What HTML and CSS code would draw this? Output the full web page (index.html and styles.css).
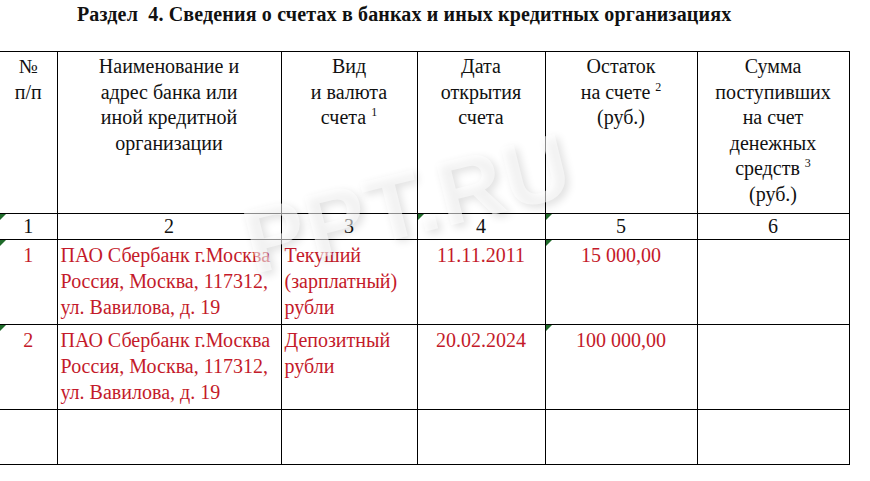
FILE: index.html
```html
<!DOCTYPE html>
<html lang="ru">
<head>
<meta charset="utf-8">
<link rel="stylesheet" href="styles.css">
</head>
<body>
<div class="page">
  <h1 class="title">Раздел&nbsp; 4. Сведения о счетах в банках и иных кредитных организациях</h1>
  <table class="grid">
    <colgroup>
      <col class="c1"><col class="c2"><col class="c3"><col class="c4"><col class="c5"><col class="c6">
    </colgroup>
    <tr class="head">
      <td class="first">№<br>п/п</td>
      <td>Наименование и<br>адрес банка или<br>иной кредитной<br>организации</td>
      <td>Вид<br>и валюта<br>счета <sup>1</sup></td>
      <td>Дата<br>открытия<br>счета</td>
      <td>Остаток<br>на счете <sup>2</sup><br>(руб.)</td>
      <td>Сумма<br>поступивших<br>на счет<br>денежных<br>средств <sup>3</sup><br>(руб.)</td>
    </tr>
    <tr class="nums">
      <td class="first mark">1</td>
      <td>2</td>
      <td>3</td>
      <td class="mark">4</td>
      <td class="mark">5</td>
      <td>6</td>
    </tr>
    <tr class="data">
      <td class="first center mark">1</td>
      <td>ПАО Сбербанк г.Москва<br>Россия, Москва, 117312,<br>ул. Вавилова, д. 19</td>
      <td>Текуший<br>(зарплатный)<br>рубли</td>
      <td class="center">11.11.2011</td>
      <td class="center mark">15 000,00</td>
      <td></td>
    </tr>
    <tr class="data">
      <td class="first center mark">2</td>
      <td>ПАО Сбербанк г.Москва<br>Россия, Москва, 117312,<br>ул. Вавилова, д. 19</td>
      <td>Депозитный<br>рубли</td>
      <td class="center">20.02.2024</td>
      <td class="center mark">100 000,00</td>
      <td></td>
    </tr>
    <tr class="empty">
      <td class="first"></td><td></td><td></td><td></td><td></td><td></td>
    </tr>
  </table>
  <div class="watermark">PPT.RU</div>
</div>
</body>
</html>
```

FILE: styles.css
```css
html, body {
  margin: 0;
  padding: 0;
  background: #fff;
}

.page {
  position: relative;
  width: 870px;
  height: 481px;
  overflow: hidden;
  font-family: "Liberation Serif", serif;
  color: #111;
}

.title {
  margin: 0;
  padding: 3px 0 0 77px;
  height: 51px;
  box-sizing: border-box;
  font-family: "Liberation Serif", serif;
  font-size: 20px;
  font-weight: bold;
  letter-spacing: 0.15px;
  line-height: 22px;
  white-space: nowrap;
}

.grid {
  border-collapse: collapse;
  table-layout: fixed;
  width: 849px;
  font-family: "Liberation Serif", serif;
  font-size: 20px;
  line-height: 25.5px;
}

.c1 { width: 57px; }
.c2 { width: 224px; }
.c3 { width: 136px; }
.c4 { width: 128px; }
.c5 { width: 152px; }
.c6 { width: 152px; }

.grid td {
  border: 1px solid #000;
  padding: 2px 3px 0 3px;
  vertical-align: top;
  position: relative;
  white-space: nowrap;
}

.grid td.first {
  border-left: none;
}

.head td {
  height: 162px;
  box-sizing: border-box;
  text-align: center;
}

.nums td {
  height: 25px;
  box-sizing: border-box;
  padding-top: 0;
  line-height: 25px;
  text-align: center;
}

.data td {
  height: 85px;
  box-sizing: border-box;
  color: #c41a2a;
  line-height: 26px;
}

.data td.center {
  text-align: center;
}

.empty td {
  height: 55px;
  box-sizing: border-box;
}

sup {
  font-size: 12px;
  line-height: 0;
  vertical-align: 8px;
}

.mark::before {
  content: "";
  position: absolute;
  left: 0;
  top: 0;
  width: 0;
  height: 0;
  border-top: 6px solid #1f6b2a;
  border-right: 6px solid transparent;
}

.watermark {
  position: absolute;
  left: 258px;
  top: 190px;
  font-family: "Liberation Sans", Arial, sans-serif;
  font-weight: bold;
  font-size: 92px;
  letter-spacing: 1px;
  color: rgba(255, 255, 255, 0.55);
  text-shadow: 3px 4px 9px rgba(0, 0, 0, 0.12);
  transform: rotate(-14deg);
  transform-origin: left bottom;
  pointer-events: none;
}
```
